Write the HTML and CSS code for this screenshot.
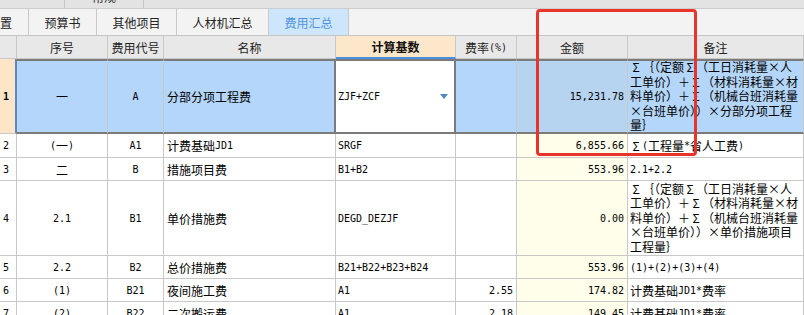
FILE: index.html
```html
<!DOCTYPE html>
<html lang="zh-CN">
<head>
    <meta charset="UTF-8">
    <meta name="viewport" content="width=device-width, initial-scale=1.0">
    <title>费用汇总</title>
    <link rel="stylesheet" href="styles.css">
</head>
<body>
    <!-- upper toolbar, mostly scrolled out of view -->
    <div class="top-strip">
        <div class="strip-item first"></div>
        <div class="strip-item second"><span>常规</span></div>
    </div>

    <!-- Tabs -->
    <div class="tabs">
        <div class="tab cut">置</div>
        <div class="tab">预算书</div>
        <div class="tab">其他项目</div>
        <div class="tab">人材机汇总</div>
        <div class="tab active">费用汇总</div>
    </div>

    <!-- Fee summary sheet -->
    <div class="sheet">
        <div class="c hd"></div>
        <div class="c hd">序号</div>
        <div class="c hd">费用代号</div>
        <div class="c hd">名称</div>
        <div class="c hd base">计算基数</div>
        <div class="c hd">费率<span class="a">(%)</span></div>
        <div class="c hd">金额</div>
        <div class="c hd">备注</div>

        <!-- row 1 (selected) -->
        <div class="c rn cur a">1</div>
        <div class="c sel ctr">一</div>
        <div class="c sel ctr a">A</div>
        <div class="c sel name">分部分项工程费</div>
        <div class="c sel edit a">
            <span>ZJF+ZCF</span>
            <svg class="drop" width="8" height="5" viewBox="0 0 8 5"><polygon points="0,0 8,0 4,5" fill="#4f87c8"/></svg>
        </div>
        <div class="c sel"></div>
        <div class="c sel amount rt a">15,231.78</div>
        <div class="c sel memo">
            <div class="lines"><span class="fw">Σ</span>｛（定额<span class="fw">Σ</span>（工日消耗量<span class="fw">×</span>人<br>工单价）＋<span class="fw">Σ</span>（材料消耗量<span class="fw">×</span>材<br>料单价）＋<span class="fw">Σ</span>（机械台班消耗量<br><span class="fw">×</span>台班单价））<span class="fw">×</span>分部分项工程<br>量｝</div>
        </div>

        <!-- row 2 -->
        <div class="c rn a">2</div>
        <div class="c ctr"><span class="a">(</span>一<span class="a">)</span></div>
        <div class="c ctr a">A1</div>
        <div class="c name">计费基础<span class="a">JD1</span></div>
        <div class="c a">SRGF</div>
        <div class="c"></div>
        <div class="c amt rt a">6,855.66</div>
        <div class="c memo"><span class="fw">Σ</span><span class="a">(</span>工程量<span class="a">*</span>省人工费<span class="a">)</span></div>

        <!-- row 3 -->
        <div class="c rn a">3</div>
        <div class="c ctr">二</div>
        <div class="c ctr a">B</div>
        <div class="c name">措施项目费</div>
        <div class="c a">B1+B2</div>
        <div class="c"></div>
        <div class="c amt rt a">553.96</div>
        <div class="c memo a">2.1+2.2</div>

        <!-- row 4 -->
        <div class="c rn a">4</div>
        <div class="c ctr a">2.1</div>
        <div class="c ctr a">B1</div>
        <div class="c name">单价措施费</div>
        <div class="c a">DEGD_DEZJF</div>
        <div class="c"></div>
        <div class="c amt rt a">0.00</div>
        <div class="c memo">
            <div class="lines"><span class="fw">Σ</span>｛（定额<span class="fw">Σ</span>（工日消耗量<span class="fw">×</span>人<br>工单价）＋<span class="fw">Σ</span>（材料消耗量<span class="fw">×</span>材<br>料单价）＋<span class="fw">Σ</span>（机械台班消耗量<br><span class="fw">×</span>台班单价））<span class="fw">×</span>单价措施项目<br>工程量｝</div>
        </div>

        <!-- row 5 -->
        <div class="c rn a">5</div>
        <div class="c ctr a">2.2</div>
        <div class="c ctr a">B2</div>
        <div class="c name">总价措施费</div>
        <div class="c a">B21+B22+B23+B24</div>
        <div class="c"></div>
        <div class="c amt rt a">553.96</div>
        <div class="c memo a">(1)+(2)+(3)+(4)</div>

        <!-- row 6 -->
        <div class="c rn a">6</div>
        <div class="c ctr a">(1)</div>
        <div class="c ctr a">B21</div>
        <div class="c name">夜间施工费</div>
        <div class="c a">A1</div>
        <div class="c rt a">2.55</div>
        <div class="c amt rt a">174.82</div>
        <div class="c memo">计费基础<span class="a">JD1*</span>费率</div>

        <!-- row 7 -->
        <div class="c rn a">7</div>
        <div class="c ctr a">(2)</div>
        <div class="c ctr a">B22</div>
        <div class="c name">二次搬运费</div>
        <div class="c a">A1</div>
        <div class="c rt a">2.18</div>
        <div class="c amt rt a">149.45</div>
        <div class="c memo">计费基础<span class="a">JD1*</span>费率</div>
    </div>

    <!-- red annotation frame -->
    <div class="mark"></div>
</body>
</html>
```

FILE: styles.css
```css
* {
    box-sizing: border-box;
}

body {
    margin: 0;
    width: 804px;
    height: 315px;
    overflow: hidden;
    position: relative;
    background-color: #fff;
    font-family: "Noto Sans CJK SC", sans-serif;
    font-size: 12px;
    color: #000;
}

/* top strip */
.top-strip {
    display: flex;
    height: 9px;
    background-color: #e3e3e3;
    border-bottom: 1px solid #cdcdcd;
    overflow: hidden;
}

.strip-item {
    border-right: 1px solid #c6c6c6;
}

.strip-item.first {
    width: 65px;
}

.strip-item.second {
    width: 79px;
    text-align: center;
    color: #333;
}

.strip-item span {
    display: block;
    line-height: 12px;
    margin-top: -9px;
}

/* tabs */
.tabs {
    display: flex;
    height: 27px;
    background-color: #f3f3f3;
    border-bottom: 1px solid #c4c4c4;
}

.tab {
    display: flex;
    align-items: center;
    padding: 0 15.5px;
    border-right: 1px solid #c9c9c9;
    color: #222;
}

.tab.cut {
    width: 29px;
    padding: 0;
}

.tab.active {
    background-color: #cde6fb;
    color: #4f95de;
}

/* sheet */
.sheet {
    display: grid;
    grid-template-columns: 17px 91px 56px 172px 120px 61px 111px 176px;
    grid-template-rows: 23px 75px 24px 23px 75px 23px 23px 23px;
}

.c {
    display: flex;
    align-items: center;
    padding: 0 2px;
    border-right: 1px solid #c8c8c8;
    border-bottom: 1px solid #c8c8c8;
    overflow: hidden;
    white-space: nowrap;
}

.a {
    font-family: "DejaVu Sans Mono", monospace;
    font-size: 10px;
}

.fw {
    display: inline-block;
    width: 12px;
    text-align: center;
}

.ctr {
    justify-content: center;
}

.rt {
    justify-content: flex-end;
    padding-right: 3px;
}

.hd {
    justify-content: center;
    background-color: #e8e8e8;
    color: #222;
}

.hd.base {
    background-color: #fde7cb;
    color: #111;
    font-weight: bold;
    border-bottom: 2px solid #4a8fdc;
}

.rn {
    padding-left: 3px;
}

.rn.cur {
    background-color: #fde5c8;
    font-weight: bold;
    border-right: 2px solid #6383c2;
}

.name {
    padding-left: 3px;
}

.amt {
    background-color: #fffeea;
}

.memo {
    padding-left: 2px;
}

.lines {
    line-height: 14.5px;
}

/* selected row */
.sel {
    background-color: #b5d6fb;
    border-top: 2px solid #7b7b7b;
    border-bottom: 2px solid #7b7b7b;
}

.sel.name {
    border-right: 2px solid #7b7b7b;
}

.sel.edit {
    justify-content: space-between;
    padding-right: 6px;
    background-color: #fff;
    border-right: 2px solid #7b7b7b;
}

.sel.amount {
    background-color: #b6d3f0;
}

.drop {
    display: block;
}

/* red annotation frame */
.mark {
    position: absolute;
    left: 536px;
    top: 9px;
    width: 161px;
    height: 147px;
    border: 3px solid #e8352c;
    border-radius: 4px;
}
```
